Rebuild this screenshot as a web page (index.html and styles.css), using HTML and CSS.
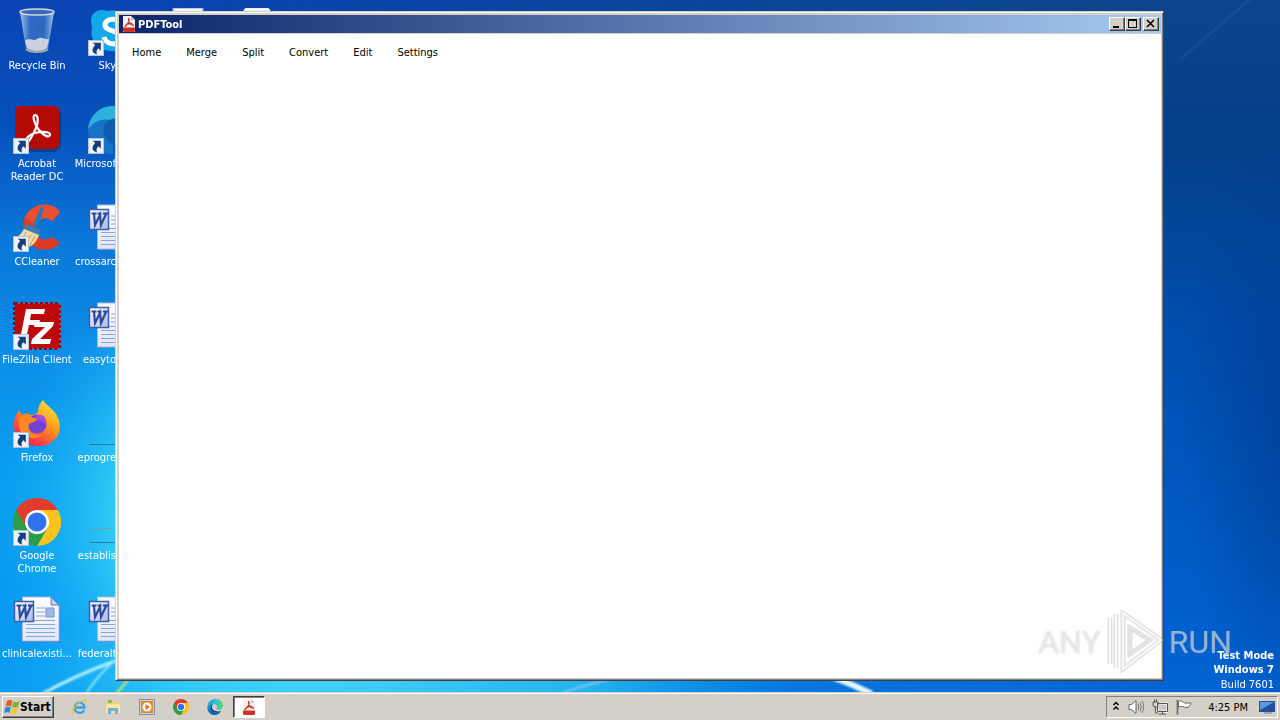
FILE: index.html
```html
<!DOCTYPE html>
<html lang="en">
<head>
<meta charset="utf-8">
<title>PDFTool</title>
<link rel="stylesheet" href="styles.css">
</head>
<body>
<svg class="defs" aria-hidden="true">
  <defs>
    <linearGradient id="gDoc" x1="0" y1="0" x2="0" y2="1"><stop offset="0" stop-color="#fff"/><stop offset="1" stop-color="#dfe6fa"/></linearGradient>
    <linearGradient id="gW" x1="0" y1="0" x2="1" y2="1"><stop offset="0" stop-color="#fff"/><stop offset="1" stop-color="#a9b9e6"/></linearGradient>
    <linearGradient id="gEdge" x1="0" y1="0" x2="1" y2="1"><stop offset="0" stop-color="#1fa8d8"/><stop offset=".5" stop-color="#1667c4"/><stop offset="1" stop-color="#0c4fa8"/></linearGradient>
    <linearGradient id="gEdge2" x1="0" y1="0" x2="1" y2="0"><stop offset="0" stop-color="#1c9fe0"/><stop offset=".6" stop-color="#35c1d8"/><stop offset="1" stop-color="#68d848"/></linearGradient>
    <linearGradient id="gFox" x1=".9" y1="0" x2=".2" y2="1"><stop offset="0" stop-color="#fff04a"/><stop offset=".4" stop-color="#ffa21c"/><stop offset=".75" stop-color="#ff4a3c"/><stop offset="1" stop-color="#e8156c"/></linearGradient>
    <linearGradient id="gBin" x1="0" y1="0" x2="1" y2="0"><stop offset="0" stop-color="#c4dcf4" stop-opacity=".85"/><stop offset=".3" stop-color="#5c90d8" stop-opacity=".5"/><stop offset=".7" stop-color="#5c90d8" stop-opacity=".45"/><stop offset="1" stop-color="#d5e6f8" stop-opacity=".8"/></linearGradient>
    <symbol id="arrow" viewBox="0 0 15 15"><path d="M0 0h15v15H0z" fill="#b4c4d6"/><path d="M1 1h13v13H1z" fill="#eef3f8"/><path d="M4.500 2.500H12V10L9.800 7.800C8 9.500 7.500 11 8.500 13.500 3.500 12.500 3 8.500 6.700 4.700z" fill="#12407f"/></symbol>
    <symbol id="word" viewBox="0 0 48 48"><path d="M10 1h28l9 9v36H10z" fill="#5266a5"/><path d="M9.500 1H38l8 8v36H9.500z" fill="url(#gDoc)" stroke="#a8b8de"/><path d="M38 1v8h8z" fill="#c5d0ef" stroke="#6378b4"/><path d="M23 12h9M23 16h9M23 20h9M13 24.500h29M13 28.500h29M13 32.500h29M13 36.500h29M13 40.500h29" stroke="#8aa4dc"/><path d="M33 12h8v9h-8z" fill="#9fb8ea" stroke="#7690cc"/><path d="M1.500 5.500h19v20h-19z" fill="url(#gW)" stroke="#3f5da8" stroke-width="1.500"/><path d="M3.500 9.500h5M9.500 9.500h4M6 10l1 11 5-10 1 10 5.500-12M15 9.500h5" fill="none" stroke="#2b4a9c" stroke-width="2.200"/></symbol>
    <symbol id="chrome" viewBox="0 0 48 48"><path d="M24 24 3.200 12A24 24 0 0 1 44.800 12z" fill="#e33b2e"/><path d="M24 24V12h20.800A24 24 0 0 1 24 48l10.400-18z" fill="#fcc31e"/><path d="M24 24l10.400 6L24 48A24 24 0 0 1 3.200 12z" fill="#2b9f47"/><path d="M3.200 12 13.600 30 24 12z" fill="#e33b2e"/><circle cx="24" cy="24" r="12" fill="#fff"/><circle cx="24" cy="24" r="9.500" fill="#2f73e8"/></symbol>
    <symbol id="edge" viewBox="0 0 48 48"><path d="M1 23C3 8 13 0 25 0c13 0 23 9 23 20 0 8-6 13-13 13-6 0-8-2-6-5 5-8-5-16-15-13C7 16 3 20 1 23z" fill="url(#gEdge2)"/><path d="M1 23C5 16 12 13 19 15c-7 3-9 11-5 18 5 8 17 11 28 4-4 7-11 11-19 11C10 48 0 38 1 23z" fill="url(#gEdge)"/><path d="M19 15c-8 6-4 18 6 21 6 2 12 2 17 0-8 8-23 7-29-3-4-7-2-15 6-18z" fill="#123f8c"/></symbol>
    <symbol id="pdf" viewBox="0 0 16 16"><path d="M2 0h8l4 4v12H2z" fill="#f3f0f2"/><path d="M10 0v4h4z" fill="#c9c5d0"/><path d="M2 11.500h12V15l-1 1H3l-1-1z" fill="#d53022"/><path d="M7.500 2C9.500 5 7 7.500 3.500 11M7.500 3c0 4 2.500 6 5.500 6.500M5 8.500c2-1 4-1.200 6.500-.8" fill="none" stroke="#c8392f" stroke-width="1.300"/></symbol>
    <symbol id="flag" viewBox="0 0 16 16"><path d="M3 2c2-1.500 4-1 5.500 0L7 7.500C5.500 6.500 3.500 6.500 1.500 7.500z" fill="#ed5a24"/><path d="M9.500 2.500c2 1 4 1 6-.2L14 8c-2 1-4 1-6 0z" fill="#78b928"/><path d="M1.300 8.500c2-1 4-1 5.500 0L5.300 14C4 13 2 13 0 14z" fill="#288bd8"/><path d="M7.700 9c2 1 4 1 6 0l-1.500 5.500c-2 1-4 1-6 0z" fill="#fcc52c"/></symbol>
  </defs>
</svg>

<main class="desktop">
  <svg class="wallpaper" viewBox="0 0 1280 692" preserveAspectRatio="none" aria-hidden="true">
    <defs>
      <linearGradient id="wLeft" x1="0" y1="0" x2="0" y2="1"><stop offset="0" stop-color="#0a45b2"/><stop offset=".18" stop-color="#0650bc"/><stop offset=".35" stop-color="#0a78d8"/><stop offset=".52" stop-color="#0b8fe8"/><stop offset=".7" stop-color="#0a9ff0"/><stop offset="1" stop-color="#0797f2"/></linearGradient>
      <linearGradient id="wRight" x1="0" y1="0" x2="0" y2="1"><stop offset="0" stop-color="#0c468a"/><stop offset=".2" stop-color="#044088"/><stop offset=".45" stop-color="#004cab"/><stop offset=".7" stop-color="#0058c0"/><stop offset="1" stop-color="#0064d4"/></linearGradient>
      <linearGradient id="wFade" x1="0" y1="0" x2="1" y2="0"><stop offset="0" stop-color="#000"/><stop offset=".12" stop-color="#000"/><stop offset=".9" stop-color="#fff"/></linearGradient>
      <mask id="wMask"><path d="M0 0h1280v692H0z" fill="url(#wFade)"/></mask>
      <radialGradient id="wGlow"><stop offset="0" stop-color="#58e4fa"/><stop offset=".5" stop-color="#3cd6f8" stop-opacity=".85"/><stop offset="1" stop-color="#18b0f4" stop-opacity="0"/></radialGradient>
      <radialGradient id="wDark"><stop offset="0" stop-color="#003a8c" stop-opacity=".7"/><stop offset="1" stop-color="#003a8c" stop-opacity="0"/></radialGradient>
      <filter id="wSoft"><feGaussianBlur stdDeviation="1"/></filter>
    </defs>
    <path d="M0 0h1280v692H0z" fill="url(#wLeft)"/>
    <path d="M0 0h1280v692H0z" fill="url(#wRight)" mask="url(#wMask)"/>
    <ellipse cx="240" cy="520" rx="240" ry="270" fill="url(#wGlow)"/>
    <ellipse cx="380" cy="680" rx="420" ry="90" fill="url(#wGlow)" opacity=".7"/>
    <ellipse cx="1300" cy="430" rx="120" ry="330" fill="url(#wDark)"/>
    <g filter="url(#wSoft)" fill="none">
      <path d="M42 694Q78 674 118 660" stroke="#b4f2fe" stroke-width="3"/>
      <path d="M86 694Q98 674 120 656" stroke="#8cecfc" stroke-width="2"/>
      <path d="M116 694l12-14" stroke="#c8f060" stroke-width="2"/>
      <path d="M560 694q30-12 70-18" stroke="#7cc8fa" stroke-width="2"/>
      <path d="M830 676q22 8 42 18" stroke="#e8f8ff" stroke-width="6"/>
      <path d="M1180 60 1256-6" stroke="#3d70ae" stroke-width="2" opacity=".4"/>
    </g>
  </svg>

  <div class="icons">
    <div class="column">
      <div class="item"><span class="pic"><svg viewBox="0 0 48 48"><path d="M7 4h34l-6 37c-3 4-19 4-22 0z" fill="url(#gBin)"/><path d="M12 33c5-4 8 1 12-2s8 1 12 0l-2 9c-4 4-16 4-20 0z" fill="#e6e4e2" opacity=".85"/><path d="M14 10l8 8 12-7-5 14-9-3z" fill="#2668b8" opacity=".5"/><ellipse cx="24" cy="4" rx="17" ry="3" fill="#3a6cb4" stroke="#cfd8e0" stroke-width="1.500"/><path d="M13 41c4 4 18 4 22 0" fill="none" stroke="#a8a8a4" stroke-width="2"/></svg></span><span class="label">Recycle Bin</span></div>
      <div class="item"><span class="pic"><svg viewBox="0 0 48 48"><rect x="3" y="1" width="45" height="45" rx="8" fill="#0a2a60" opacity=".5"/><rect x="2" y="0" width="44" height="43" rx="5" fill="#b50b05"/><path d="M22 9c-3 0-1 9 4 15s10 8 11 5-7-4-15-2-11 9-9 10 7-8 10-15 2-13-1-13z" fill="none" stroke="#fff" stroke-width="2.200"/></svg><svg class="shortcut"><use href="#arrow"/></svg></span><span class="label">Acrobat Reader DC</span></div>
      <div class="item"><span class="pic"><svg viewBox="0 0 48 48"><path d="M47 8C40 0 25-2 16 7S9 34 18 41s22 6 29-2l-8-6c-5 4-12 3-15-2s-3-11 2-15 11-3 14 1z" fill="#df3b22"/><path d="M47 8l-8 9c-5-5-14-3-16 4L12 14C18-1 38-4 47 8z" fill="#e85030"/><path d="M28 3l3 1-6 19-5-2z" fill="#2878c0"/><path d="M14 20l14 6-2 6-16-7z" fill="#397eb8"/><path d="M11 25l15 6c-2 6-6 11-12 13L1 34c4-1 7-4 10-9z" fill="#f4dba4"/><path d="M13 28l-5 9M18 31l-6 11M22 32l-6 11" stroke="#c49b58"/></svg><svg class="shortcut"><use href="#arrow"/></svg></span><span class="label">CCleaner</span></div>
      <div class="item"><span class="pic"><svg viewBox="0 0 48 48"><path d="M2 2h44v44H2z" fill="#b60808" stroke="#9b0505" stroke-width="4" stroke-dasharray="3 2"/><path d="M2 2h44v44H2z" fill="#bd0909"/><path d="M13 7h19l-1 5H18l-1 6h10l-1 5H16l-3 14H7z" fill="#fff"/><path d="M22 20h19l-1 4-13 13h11l-1 5H18l1-5 13-12H21z" fill="#fff"/></svg><svg class="shortcut"><use href="#arrow"/></svg></span><span class="label">FileZilla Client</span></div>
      <div class="item"><span class="pic"><svg viewBox="0 0 48 48"><path d="M30 0c2 5 12 9 15 18 6 14-3 28-20 28C10 46 0 38 1 24c0-5 2-10 5-14l3 5c3-2 6-2 9 0 3 0 5-1 7-3 0-5 2-9 5-12z" fill="url(#gFox)"/><circle cx="24" cy="24" r="9.500" fill="#7042cf"/><path d="M9 15c6-1 9 4 16 3-2 5-7 4-9 6-3 8 6 13 14 10-8 8-23 3-24-8-1-5 0-8 3-11z" fill="#ff8a22"/><path d="M22 16c8-4 13 3 11 10-2-4-5-6-9-6z" fill="#a34bdc"/></svg><svg class="shortcut"><use href="#arrow"/></svg></span><span class="label">Firefox</span></div>
      <div class="item"><span class="pic"><svg><use href="#chrome"/></svg><svg class="shortcut"><use href="#arrow"/></svg></span><span class="label">Google Chrome</span></div>
      <div class="item"><span class="pic"><svg><use href="#word"/></svg></span><span class="label">clinicalexisti...</span></div>
    </div>
    <div class="column cut">
      <div class="item"><span class="pic"><svg viewBox="0 0 48 48"><path d="M3 13C3 4 11 0 19 3c15-3 28 8 25 23 4 11-7 22-17 17C12 45 1 33 4 20z" fill="#12a8ea"/><path d="M33 16c-3-7-16-6-16 1s16 5 16 13-15 8-17-1" fill="none" stroke="#fff" stroke-width="5"/></svg><svg class="shortcut"><use href="#arrow"/></svg></span><span class="label">Sky</span></div>
      <div class="item"><span class="pic"><svg viewBox="0 0 48 48"><path d="M0 23C2 8 13 0 25 0v48C10 48 0 38 0 23z" fill="#1673c8"/><path d="M0 23C2 8 13 0 25 0c13 0 23 9 23 20l-12 5C30 12 11 8 0 23z" fill="#2cb1dc"/><path d="M16 20c-3 10 4 18 14 20V13c-6-1-12 1-14 7z" fill="#0f5dac"/></svg><svg class="shortcut"><use href="#arrow"/></svg></span><span class="label">Microsof</span></div>
      <div class="item"><span class="pic"><svg><use href="#word"/></svg></span><span class="label">crossarc</span></div>
      <div class="item"><span class="pic"><svg><use href="#word"/></svg></span><span class="label">easyto</span></div>
      <div class="item"><span class="pic"><svg viewBox="0 0 48 48"><path d="M2 44.500h46" stroke="#2a7f9c"/></svg></span><span class="label">eprogre</span></div>
      <div class="item"><span class="pic"><svg viewBox="0 0 48 48"><path d="M2 30.500h22" stroke="#69a8a0"/><path d="M2 44.500h46" stroke="#2a7f9c"/></svg></span><span class="label">establis</span></div>
      <div class="item"><span class="pic"><svg><use href="#word"/></svg></span><span class="label">federalf</span></div>
    </div>
    <div class="column peek"><div class="item"><span class="pic"><svg viewBox="0 0 48 48"><path d="M10 0h30v46H10z" fill="#f4f6fc" stroke="#8c9cc8"/></svg></span></div></div>
    <div class="column peek"><div class="item"><span class="pic"><svg viewBox="0 0 48 48"><rect x="10" y="-1" width="28" height="46" rx="6" fill="#f1f4fa"/></svg></span></div></div>
  </div>

  <div class="build"><b>Test Mode</b><b>Windows 7</b><span>Build 7601</span></div>

  <section class="window">
    <header class="titlebar">
      <svg class="appicon"><use href="#pdf"/></svg>
      <h1>PDFTool</h1>
      <button class="ctl" aria-label="Minimize"><svg viewBox="0 0 12 10"><path d="M2 7h6v2H2z"/></svg></button>
      <button class="ctl" aria-label="Maximize"><svg viewBox="0 0 12 10"><path d="M1 0h9v9H1zM2 2v6h7V2z" fill-rule="evenodd"/></svg></button>
      <button class="ctl close" aria-label="Close"><svg viewBox="0 0 12 10"><path d="M2 1l7 7M9 1 2 8" stroke="#000" stroke-width="1.600"/></svg></button>
    </header>
    <nav class="menu">
      <button>Home</button><button>Merge</button><button>Split</button><button>Convert</button><button>Edit</button><button>Settings</button>
    </nav>
  </section>

  <div class="watermark"><span>ANY</span>
    <svg viewBox="0 0 60 64"><path d="M5 8v46M11 4v54M18 3l38 27-38 29zM18 12v40M25 18v26l20-14z" fill="none" stroke="#8d8d8d" stroke-opacity=".25" stroke-width="5"/><path d="M5 8v46M11 4v54M18 3l38 27-38 29z" fill="none" stroke="#fff" stroke-opacity=".8" stroke-width="2"/></svg>
    <span>RUN</span></div>
</main>

<footer class="taskbar">
  <button class="start"><svg><use href="#flag"/></svg>Start</button>
  <div class="tasks">
    <button aria-label="Internet Explorer"><svg viewBox="0 0 16 16"><path d="M13 11c-1 2.500-3.500 3.500-6 2.500S3 10 4 7s4-4 6.500-3S13.500 6.500 13.500 8.500H5" fill="none" stroke="#35a4e4" stroke-width="2.400"/><path d="M2 15c-3-2 2-9 7-12 4-3 8-3 6 1" fill="none" stroke="#efbd35" stroke-width="1.300"/></svg></button>
    <button aria-label="Explorer"><svg viewBox="0 0 16 16"><path d="M1 2h5l1 1h8v11H1z" fill="#efd27a"/><path d="M3 1h4v3H3z" fill="#7dbb60"/><path d="M1 5h14v9H1z" fill="#f8e6a0"/><path d="M3 15V9h10v6h-3v-3H6v3z" fill="#6bb3df"/></svg></button>
    <button aria-label="Media Player"><svg viewBox="0 0 16 16"><path d="M.5.500h15v15H.5z" fill="#bcd4ee" stroke="#6d93bd"/><path d="M2 2h12v12H2z" fill="#f08818"/><circle cx="8" cy="8" r="4.500" fill="#fff"/><path d="M6.500 5 11 8l-4.500 3z" fill="#e86c10"/></svg></button>
    <button aria-label="Chrome"><svg><use href="#chrome"/></svg></button>
    <button aria-label="Edge"><svg><use href="#edge"/></svg></button>
    <button class="active" aria-label="PDFTool"><svg><use href="#pdf"/></svg></button>
  </div>
  <div class="tray">
    <svg class="chev" viewBox="0 0 8 16"><path d="M1.500 6 4 3.500 6.500 6M1.500 10.500 4 8l2.500 2.500" fill="none" stroke="#000" stroke-width="1.500"/></svg>
    <svg viewBox="0 0 16 16"><path d="M1 5.500h2.500L8 1.500v13l-4.500-4H1z" fill="#fff" stroke="#666"/><path d="M10 5q1.500 3 0 6M12 3.500q2.500 4.500 0 9M14 2q3.500 6 0 12" fill="none" stroke="#777"/></svg>
    <svg viewBox="0 0 16 16"><path d="M5.500 4.500h10v8h-10z" fill="#c8c8c8" stroke="#fff" stroke-width="2"/><path d="M5.500 4.500h10v8h-10zM7 15h7M10.500 12.500V15M1 3h5v3l-1 2H2L1 6zM2.500 3V.5M4.500 3V.5M3.500 8v6h3" fill="none" stroke="#555"/></svg>
    <svg viewBox="0 0 16 16"><path d="M1.500 1v14.500" stroke="#777" stroke-width="2"/><path d="M2.500 2.500c3-1.500 4 .5 6 1.500h6.500c-1 3-2 4-4 4.500-4 0-4-2-8.500-.5z" fill="#fff" stroke="#666"/></svg>
    <time>4:25 PM</time>
    <svg viewBox="0 0 16 16"><path d="M0 2h16v11H0z" fill="#244f9c"/><path d="M1 3h14L1 11z" fill="#5c9be0"/><path d="M5 13h8v2H5z" fill="#9ea8b4"/></svg>
  </div>
</footer>
</body>
</html>
```
FILE: styles.css
```css
* { box-sizing: border-box; }
html, body { height: 100%; }
body {
  margin: 0;
  display: flex;
  flex-direction: column;
  overflow: hidden;
  font-family: "DejaVu Sans Condensed", "DejaVu Sans", sans-serif;
  font-size: 11px;
  line-height: 13px;
  color: #000;
}
button { font: inherit; color: inherit; padding: 0; border: 0; background: none; }
svg { display: block; }
.defs { position: absolute; width: 0; height: 0; }

.desktop { flex: 1; position: relative; overflow: hidden; background: #0a6ad0; }
.wallpaper { position: absolute; inset: 0; width: 100%; height: 100%; }

.icons { position: relative; display: flex; color: #fff; padding-top: 8px; }
.column { width: 74px; flex: none; }
.item { height: 98px; display: flex; flex-direction: column; align-items: center; gap: 3px; }
.pic { position: relative; width: 48px; height: 48px; }
.pic > svg { width: 48px; height: 48px; }
.pic > .shortcut { position: absolute; left: 0; bottom: 0; width: 16px; height: 16px; }
.label { text-align: center; padding: 0 2px; }
.cut { width: 42px; overflow: hidden; }
.cut .item { align-items: flex-end; }
.cut .pic { width: 28px; }
.cut .label { padding: 0; }
.peek { width: 70px; }
.icons .cut + .peek { margin-left: 36px; }

.build {
  position: absolute; right: 6px; bottom: 0;
  display: flex; flex-direction: column; align-items: flex-end;
  line-height: 14px; color: #fff;
}
.build span { line-height: 15px; }

.window {
  position: absolute; inset: 11px 116px 11px 115px;
  display: flex; flex-direction: column;
  padding: 3px 2px 2px 3px;
  background: #d4d0c8;
  border: 1px solid;
  border-color: #d4d0c8 #404040 #404040 #d4d0c8;
  box-shadow: inset 1px 1px #fff, inset -1px -1px #808080;
}
.titlebar {
  display: flex; align-items: center;
  height: 18px; padding: 0 2px;
  background: linear-gradient(90deg, #0a246a, #a6caf0);
  color: #fff;
}
.titlebar h1 { flex: 1; margin: 0 0 0 1px; font-size: 11px; line-height: 13px; }
.appicon { width: 16px; height: 16px; }
.ctl {
  width: 16px; height: 14px; padding: 1px;
  background: #d4d0c8;
  border: 1px solid;
  border-color: #fff #404040 #404040 #fff;
  box-shadow: inset -1px -1px #808080;
}
.ctl svg { width: 12px; height: 10px; }
.close { margin-left: 2px; }
.menu { flex: 1; display: flex; align-items: flex-start; gap: 1px; padding-left: 1px; margin-top: 1px; background: #fff; }
.menu button { padding: 12px; }

.watermark {
  position: absolute; right: 48px; bottom: 18px;
  display: flex; align-items: center; gap: 4px;
  font-family: Roboto, sans-serif;
  font-size: 32px; line-height: 64px;
  color: rgba(255, 255, 255, .5);
  text-shadow: 0 0 2px rgba(120, 120, 120, .4);
}
.watermark svg { width: 60px; height: 64px; }

.taskbar {
  display: flex; align-items: center;
  height: 28px; padding: 4px 2px 2px;
  background: #d4d0c8;
  box-shadow: inset 0 1px #d4d0c8, inset 0 2px #fff;
}
.start {
  display: flex; align-items: center;
  width: 52px; height: 22px; padding-left: 1px;
  font-weight: bold; font-size: 12px;
  border: 1px solid;
  border-color: #fff #404040 #404040 #fff;
  box-shadow: inset -1px -1px #808080;
}
.start svg { width: 16px; height: 16px; }
.tasks { flex: 1; display: flex; gap: 2px; margin-left: 9px; }
.tasks button { width: 32px; height: 22px; display: flex; align-items: center; justify-content: center; }
.tasks svg { width: 16px; height: 16px; }
.tasks .active { background: #fff; border: 1px solid; border-color: #404040 #fff #fff #404040; box-shadow: inset 1px 1px #808080; }
.tray {
  display: flex; align-items: center; gap: 8px;
  height: 22px; padding: 0 2px 0 5px;
  border: 1px solid; border-color: #808080 #fff #fff #808080;
}
.tray svg { width: 16px; height: 16px; }
.tray .chev { width: 8px; }
.tray time { margin: 0 3px 0 8px; }
```
